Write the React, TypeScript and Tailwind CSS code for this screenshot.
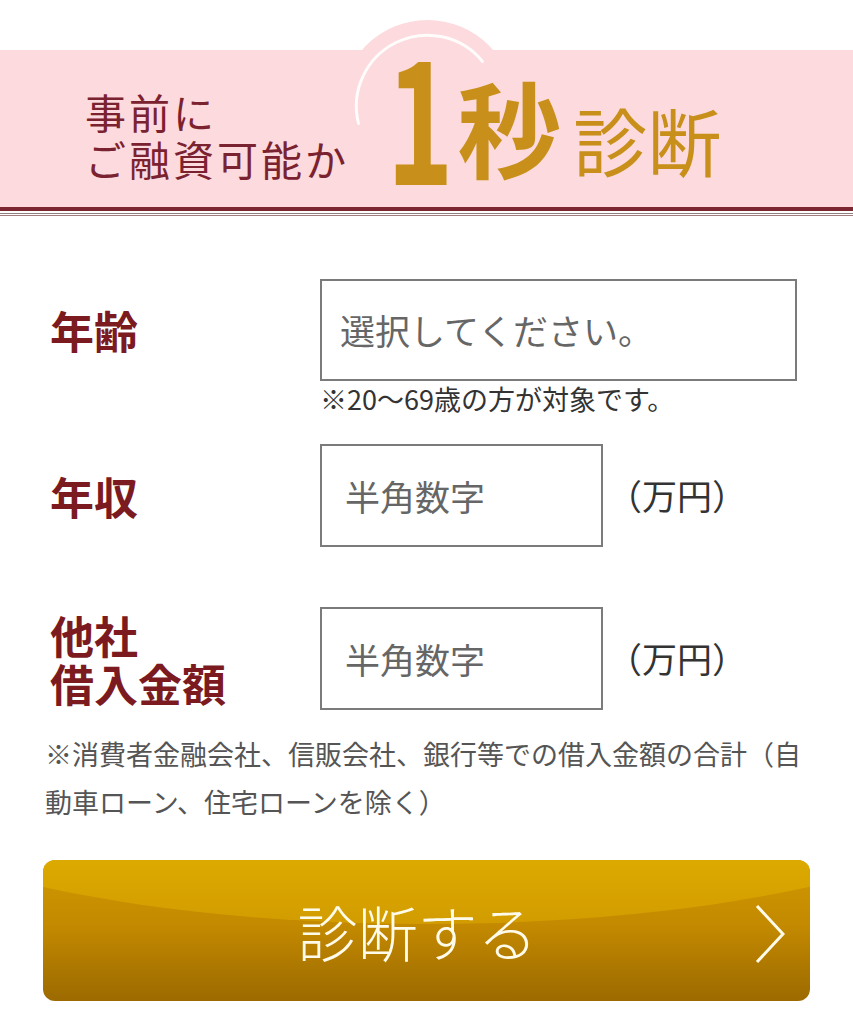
import React from "react";

function HeaderBump() {
  return (
    <svg
      className="absolute left-[341px] top-[20px]"
      width="173"
      height="110"
      viewBox="0 0 173 110"
    >
      <circle cx="86.5" cy="86.5" r="86.5" fill="#fcdadd" />
      <path
        d="M 17.5 103.5 A 71 71 0 0 1 141.5 41.5"
        fill="none"
        stroke="#ffffff"
        strokeWidth="3"
        strokeLinecap="round"
        opacity="0.9"
      />
    </svg>
  );
}

function Header() {
  return (
    <header className="relative pt-[50px]">
      <HeaderBump />
      <div className="h-[157px] bg-[#fcdadd]">
        <div className="relative z-10 flex items-start pl-[85px]">
          <div className="mt-[38px] text-[41px] leading-[47px] tracking-[3px] text-[#7b2230]">
            事前に
            <br />
            ご融資可能か
          </div>
          {/* narrow tall numeral */}
          <div className="ml-[21px] mt-[-24px] origin-center scale-x-[0.67] text-[170px] font-bold leading-none text-[#c8901a]">
            1
          </div>
          <div className="ml-[-13px] mt-[24px] text-[104px] font-bold leading-none text-[#c8901a]">
            秒
          </div>
          <div className="ml-[12px] mt-[52px] text-[74px] leading-none text-[#c8901a]">
            診断
          </div>
        </div>
      </div>
      <div className="h-[4px] bg-[#7c2631]" />
      <div className="h-[2px]" />
      <div className="h-[1px] bg-[#8f8080]" />
      <div className="h-[1px]" />
      <div className="h-[1px] bg-[#a47c80]" />
    </header>
  );
}

function Label({ children }: { children: React.ReactNode }) {
  return (
    <div className="w-[270px] shrink-0 text-[44px] font-bold leading-[48px] text-[#7b1a1f]">
      {children}
    </div>
  );
}

function NumberField() {
  return (
    <div className="flex items-center">
      <input
        type="text"
        inputMode="numeric"
        placeholder="半角数字"
        className="box-border h-[103px] w-[283px] border-2 border-[#7b7b7b] bg-white pl-[23px] text-[35px] text-[#333] outline-none placeholder:text-[#666]"
      />
      <span className="ml-[4px] text-[35px] text-[#333]">（万円）</span>
    </div>
  );
}

export default function App() {
  return (
    <div className="min-h-[1024px] w-[853px] bg-white font-['Noto_Sans_CJK_JP','Noto_Sans',sans-serif]">
      <Header />

      <form className="pl-[50px] pt-[63px]" onSubmit={(e) => e.preventDefault()}>
        <div className="flex items-center">
          <Label>年齢</Label>
          <div className="box-border flex h-[102px] w-[477px] items-center border-2 border-[#7b7b7b] pl-[18px] text-[35px] text-[#666]">
            選択してください。
          </div>
        </div>
        <p className="ml-[270px] text-[27px] leading-[36px] text-[#333]">
          ※20〜69歳の方が対象です。
        </p>

        <div className="mt-[27px] flex items-center">
          <Label>年収</Label>
          <NumberField />
        </div>

        <div className="mt-[60px] flex items-center">
          <Label>
            他社
            <br />
            借入金額
          </Label>
          <NumberField />
        </div>

        <p className="ml-[-5px] mt-[20px] w-[765px] text-[27px] leading-[48px] text-[#555]">
          ※消費者金融会社、信販会社、銀行等での借入金額の合計（自動車ローン、住宅ローンを除く）
        </p>

        <button
          type="submit"
          className="relative ml-[-7px] mt-[34px] flex h-[141px] w-[767px] items-center justify-center overflow-hidden rounded-[12px] bg-[linear-gradient(to_bottom,#d09800_0%,#c48a00_45%,#9c6a00_100%)] pr-[18px]"
        >
          <span className="absolute left-[-222px] top-[-264px] h-[328px] w-[1210px] rounded-[50%] bg-[linear-gradient(to_bottom,#dcaa00_80%,#d29c00_100%)]" />
          <span className="relative text-[60px] font-light leading-none text-[#fffbea]">
            診断する
          </span>
          <svg
            className="absolute right-[25px] top-[44px]"
            width="30"
            height="60"
            viewBox="0 0 30 60"
          >
            <polyline
              points="2,2 28,30 2,58"
              fill="none"
              stroke="#fffbea"
              strokeWidth="3"
            />
          </svg>
        </button>
      </form>
    </div>
  );
}
